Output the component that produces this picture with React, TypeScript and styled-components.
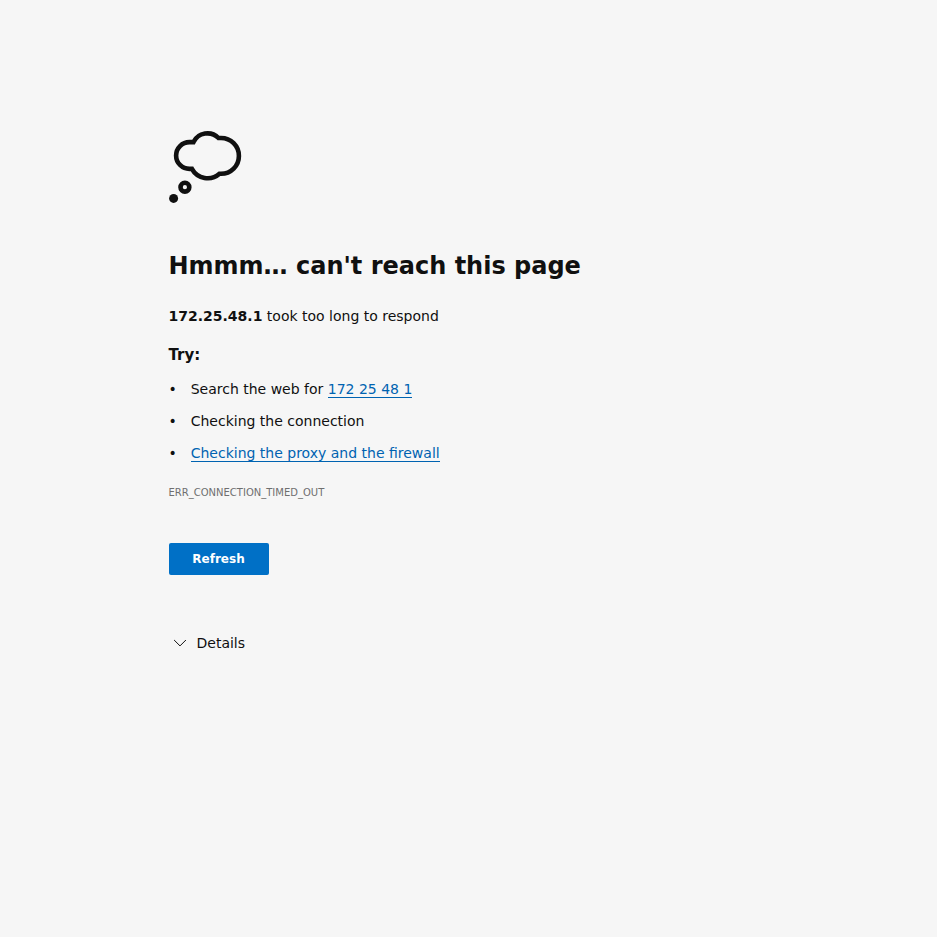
import React from "react";
import styled, { createGlobalStyle } from "styled-components";

const Global = createGlobalStyle`
  *, *::before, *::after { box-sizing: border-box; }
  body { margin: 0; background: #f6f6f6; color: #101010; font-family: "DejaVu Sans", sans-serif; font-size: 14px; line-height: 20px; }
`;
const Page = styled.main`
  width: 600px;
  min-height: 937px;
  margin: 0 auto;
  padding-top: 131px;
  display: flex;
  flex-direction: column;
  align-items: flex-start;
`;
const Cloud = styled.svg`
  display: block;
  width: 73px;
  height: 73px;
`;
const Title = styled.h1`
  margin: 46px 0 0;
  font-size: 24px;
  line-height: 32px;
  font-weight: 700;
`;
const Summary = styled.p`
  margin: 24px 0 0;
`;
const TryHeading = styled.h2`
  margin: 19px 0 0;
  font-size: 15px;
  line-height: 20px;
  font-weight: 700;
`;
const Suggestions = styled.ul`
  margin: 14px 0 0;
  padding: 0;
  list-style: none;
  display: grid;
  gap: 12px;
`;
const Suggestion = styled.li`
  display: flex;
  height: 20px;
  &::before { content: "•"; width: 22.2px; }
`;
const Link = styled.a`
  color: #0063b1;
  text-decoration: none;
  display: inline-block;
  height: 19px;
  border-bottom: 1px solid #0063b1;
`;
const ErrorCode = styled.div`
  margin-top: 20px;
  font-size: 10px;
  line-height: 20px;
  color: #6f6f6f;
`;
const Refresh = styled.button`
  margin-top: 40px;
  width: 100px;
  height: 32px;
  padding: 0;
  border: 0;
  border-radius: 2px;
  background: #0070c6;
  color: #fff;
  font: 700 12px/32px "DejaVu Sans", sans-serif;
`;
const Details = styled.button`
  margin-top: 58px;
  padding: 0 0 0 5px;
  border: 0;
  background: none;
  color: inherit;
  font: inherit;
  display: flex;
  align-items: center;
  gap: 10px;
`;

export default function App() {
  return (
    <>
      <Global />
      <Page>
        <Cloud viewBox="0 0 73 73" fill="none" stroke="#101010" strokeWidth="4.6" aria-hidden="true">
          <path d="M24.500 11.100A15.500 15.500 0 0 1 49.500 7H52A17.900 17.900 0 0 1 52 42.800H50.500A18 18 0 0 1 22.900 37.900H20.500A13.400 13.400 0 0 1 20.500 11.100Z" />
          <circle cx="15.900" cy="56.200" r="4.400" />
          <circle cx="4.600" cy="67.400" r="4.500" fill="#101010" stroke="none" />
        </Cloud>
        <Title>Hmmm… can't reach this page</Title>
        <Summary><strong>172.25.48.1</strong> took too long to respond</Summary>
        <TryHeading>Try:</TryHeading>
        <Suggestions>
          <Suggestion><span>Search the web for <Link>172 25 48 1</Link></span></Suggestion>
          <Suggestion>Checking the connection</Suggestion>
          <Suggestion><Link>Checking the proxy and the firewall</Link></Suggestion>
        </Suggestions>
        <ErrorCode>ERR_CONNECTION_TIMED_OUT</ErrorCode>
        <Refresh>Refresh</Refresh>
        <Details>
          <svg width="13" height="8" viewBox="0 0 13 8" fill="none" stroke="#101010"><path d="M.1 1L6 6.900L11.900 1" /></svg>
          Details
        </Details>
      </Page>
    </>
  );
}
